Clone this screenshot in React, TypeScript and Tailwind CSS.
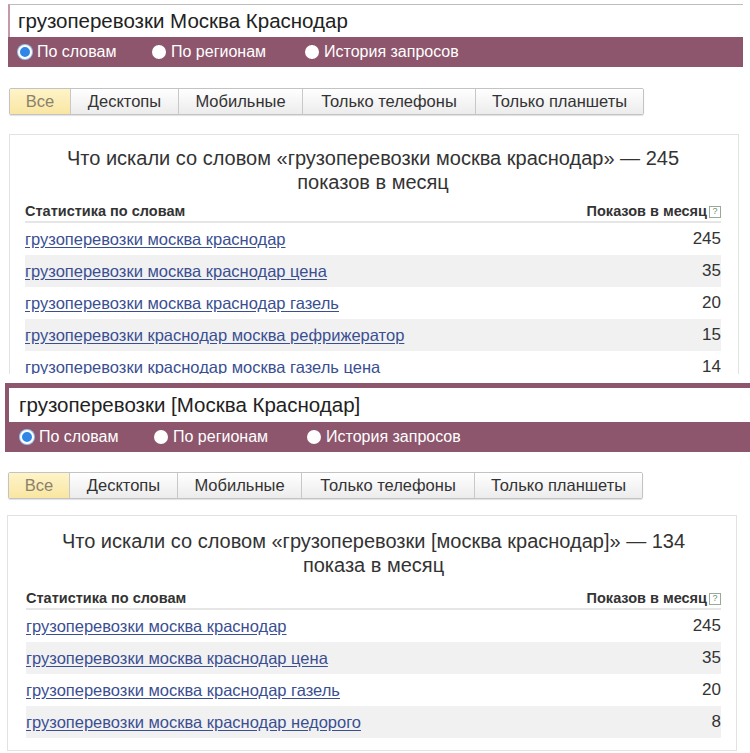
import React from "react";

// Два стопкой снимка Яндекс Вордстат: широкое и фразовое соответствие
type Row = { phrase: string; count: number };

const first = {
  query: "грузоперевозки Москва Краснодар",
  title: "Что искали со словом «грузоперевозки москва краснодар» — 245",
  title2: "показов в месяц",
  rows: [
    { phrase: "грузоперевозки москва краснодар", count: 245 },
    { phrase: "грузоперевозки москва краснодар цена", count: 35 },
    { phrase: "грузоперевозки москва краснодар газель", count: 20 },
    { phrase: "грузоперевозки краснодар москва рефрижератор", count: 15 },
    { phrase: "грузоперевозки краснодар москва газель цена", count: 14 },
  ] as Row[],
};

const second = {
  query: "грузоперевозки [Москва Краснодар]",
  title: "Что искали со словом «грузоперевозки [москва краснодар]» — 134",
  title2: "показа в месяц",
  rows: [
    { phrase: "грузоперевозки москва краснодар", count: 245 },
    { phrase: "грузоперевозки москва краснодар цена", count: 35 },
    { phrase: "грузоперевозки москва краснодар газель", count: 20 },
    { phrase: "грузоперевозки москва краснодар недорого", count: 8 },
  ] as Row[],
};

const tabs = [
  { label: "Все", w: "w-[60px]" },
  { label: "Десктопы", w: "w-[108px]" },
  { label: "Мобильные", w: "w-[124px]" },
  { label: "Только телефоны", w: "w-[173px]" },
  { label: "Только планшеты", w: "w-[168px]" },
];

function Radio({ label, active }: { label: string; active?: boolean }) {
  return (
    <div className="flex items-center gap-[5px]">
      {active ? (
        <span className="h-[14px] w-[14px] rounded-full border-2 border-white bg-[#2f86e6] shadow-[0_0_0_1px_#9ac3f0]" />
      ) : (
        <span className="h-[14px] w-[14px] rounded-full bg-white" />
      )}
      <span className="text-[16px] text-white">{label}</span>
    </div>
  );
}

function RadioBar({ pad }: { pad: string }) {
  return (
    <div className={`flex h-[30px] items-center bg-[#8d566c] ${pad}`}>
      <div className="w-[134px]">
        <Radio label="По словам" active />
      </div>
      <div className="w-[153px]">
        <Radio label="По регионам" />
      </div>
      <Radio label="История запросов" />
    </div>
  );
}

function Tabs() {
  return (
    <div className="flex h-[27px] w-fit overflow-hidden rounded-[2px] border border-[#c3c3c3] shadow-[0_1px_1px_rgba(0,0,0,0.12)]">
      {tabs.map((t, i) => (
        <div
          key={t.label}
          className={`flex items-center justify-center text-[16.5px] ${t.w} ${
            i > 0 ? "border-l border-[#c8c8c8]" : ""
          } ${
            i === 0
              ? "bg-gradient-to-b from-[#fff4c9] to-[#f9e6a2] text-[#8a826a]"
              : "bg-gradient-to-b from-white to-[#ececec] text-[#333]"
          }`}
        >
          {t.label}
        </div>
      ))}
    </div>
  );
}

function StatsCard({
  title,
  title2,
  rows,
  pt,
  mt,
  px,
}: {
  title: string;
  title2: string;
  rows: Row[];
  pt: string;
  mt: string;
  px: string;
}) {
  return (
    <div className={`border border-[#e2e2e2] pb-[12px] ${px}`}>
      <div className={`${pt} text-center text-[20px] leading-[24px] text-[#333]`}>
        <div>{title}</div>
        <div>{title2}</div>
      </div>
      <div
        className={`${mt} flex h-[24px] items-center justify-between border-b-2 border-[#e6e6e6] pt-[3px] text-[14.5px] font-bold text-[#333]`}
      >
        <span>Статистика по словам</span>
        <span className="flex items-center gap-[2px]">
          Показов в месяц
          <span className="flex h-[12px] w-[12px] items-center justify-center border border-[#9aa89a] text-[9px] leading-none font-normal text-[#6f8a6f]">
            ?
          </span>
        </span>
      </div>
      {rows.map((r, i) => (
        <div
          key={r.phrase}
          className={`flex h-[32px] items-center justify-between ${i % 2 === 1 ? "bg-[#f1f1f1]" : ""}`}
        >
          <a className="text-[16.5px] text-[#3a4f92] underline underline-offset-2">{r.phrase}</a>
          <span className="text-[17px] text-[#333]">{r.count}</span>
        </div>
      ))}
    </div>
  );
}

export default function App() {
  return (
    <div className="w-[750px] bg-white font-['Liberation_Sans',Arial,sans-serif]">
      {/* первый снимок */}
      <div className="h-[374px] overflow-hidden">
        <div className="pt-[4px] pl-[8px] pr-[7px]">
          <div className="flex h-[33px] items-center border-t border-l-2 border-t-[#bdbdbd] border-l-[#c49aa9] bg-white pl-[8px] text-[20.5px] text-[#222]">
            {first.query}
          </div>
          <RadioBar pad="pl-[10px]" />
        </div>
        <div className="mt-[21px] pl-[9px]">
          <Tabs />
        </div>
        <div className="mt-[19px] ml-[9px] mr-[11px]">
          <StatsCard
            pt="pt-[11px]"
            mt="mt-[5px]"
            px="pl-[15px] pr-[17px]"
            title={first.title}
            title2={first.title2}
            rows={first.rows}
          />
        </div>
      </div>

      {/* второй снимок */}
      <div className="pt-[9px]">
        <div className="ml-[5px] border-t-[5px] border-l-[4px] border-[#8d566c]">
          <div className="flex h-[34px] items-center bg-white pl-[10px] text-[20.5px] text-[#222]">
            {second.query}
          </div>
          <RadioBar pad="pl-[11px]" />
        </div>
        <div className="mt-[20px] pl-[8px]">
          <Tabs />
        </div>
        <div className="mt-[16px] ml-[7px] mr-[13px]">
          <StatsCard
            pt="pt-[13px]"
            mt="mt-[9px]"
            px="pl-[18px] pr-[15px]"
            title={second.title}
            title2={second.title2}
            rows={second.rows}
          />
        </div>
      </div>
    </div>
  );
}
